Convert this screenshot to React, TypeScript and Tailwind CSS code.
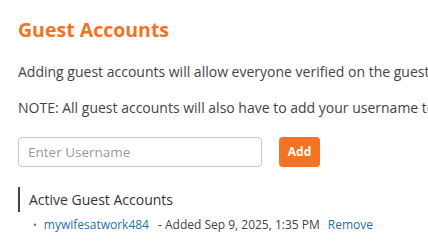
export default function App() {
  return (
    <div className="h-[250px] w-[428px] overflow-hidden bg-white font-['Open_Sans',sans-serif] text-[#444]">
      <div className="w-[700px] px-[18px] pt-[17px]">
        <h2 className="text-[19.5px] font-bold leading-[26px] text-[#f07424]">Guest Accounts</h2>
        <p className="mt-[19px] whitespace-nowrap text-[14px] leading-[20px]">
          Adding guest accounts will allow everyone verified on the guest account to view your profile.
        </p>
        <p className="mt-[16px] whitespace-nowrap text-[14px] leading-[20px]">
          NOTE: All guest accounts will also have to add your username to their guest accounts.
        </p>

        <div className="mt-[19px] flex items-center gap-[17px]">
          <input
            type="text"
            placeholder="Enter Username"
            className="h-[30px] w-[244px] rounded-[4px] border border-[#c8c8c8] px-[9px] text-[13.5px] text-[#444] outline-none placeholder:text-[#9a9a9a]"
          />
          <button
            type="button"
            className="h-[30px] w-[41px] rounded-[4px] bg-[#f07424] text-[12px] font-bold text-white"
          >
            Add
          </button>
        </div>

        <div className="mt-[20px] border-l-2 border-[#444] pl-[9px]">
          <h3 className="text-[14px] leading-[25px] text-[#333]">Active Guest Accounts</h3>
        </div>
        <ul className="mt-[3px] pl-[15px] text-[12px] leading-[20px]">
          <li className="flex items-center whitespace-nowrap">
            <span className="mr-[7px] text-[10px] text-[#666]">•</span>
            <a href="#" className="text-[#1f73a3]">mywifesatwork484</a>
            <span className="ml-[9px]">- Added Sep 9, 2025, 1:35 PM</span>
            <a href="#" className="ml-[8px] text-[#1f73a3]">Remove</a>
          </li>
        </ul>
      </div>
    </div>
  );
}
